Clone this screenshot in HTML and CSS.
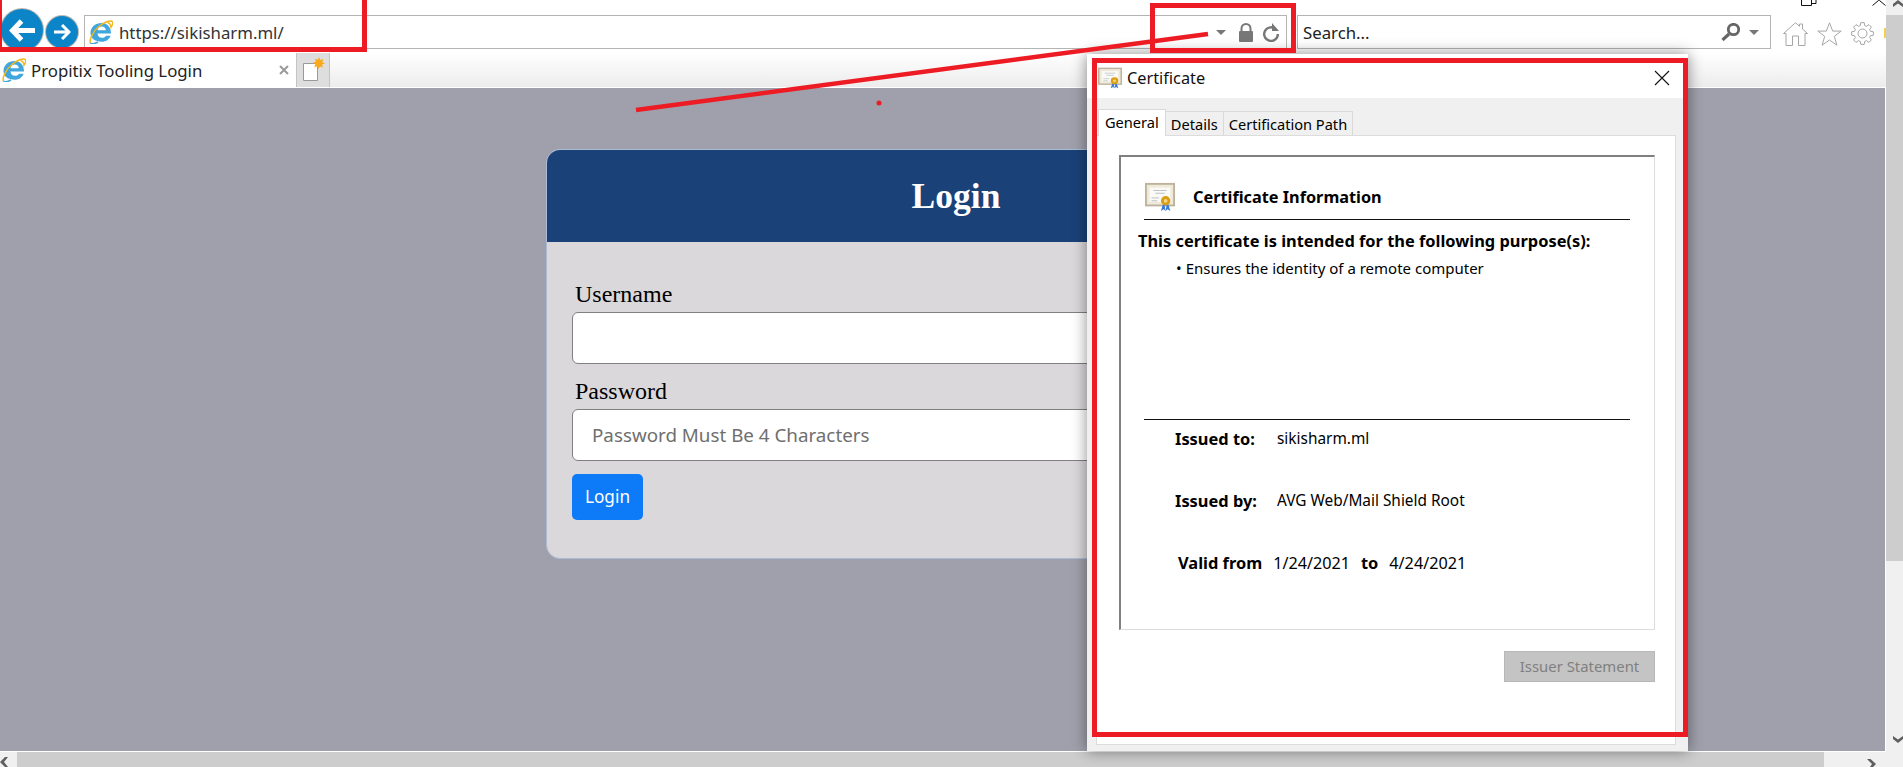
FILE: index.html
```html
<!DOCTYPE html>
<html lang="en">
<head>
  <meta charset="UTF-8" />
  <title>Propitix Tooling Login</title>
  <link rel="stylesheet" href="styles.css">
</head>
<body>
  <div class="screen">
    <div class="browser">
      <header class="toolbar">
        <div class="nav-btns">
          <span class="nav-back">
            <svg width="26" height="23" viewBox="0 0 26 23"><path d="M12.500 2 3.500 11.500l9 9.500M4 11.500h22" fill="none" stroke="#fff" stroke-width="5"/></svg>
          </span>
          <span class="nav-forward">
            <svg width="18" height="16" viewBox="0 0 18 16"><path d="M9 1l7 7-7 7M16 8H1" fill="none" stroke="#fff" stroke-width="3"/></svg>
          </span>
        </div>
        <div class="address">
          <svg class="ie" width="24" height="24" viewBox="0 0 24 24"><use href="#ie-logo"/></svg>
          <span class="url">https://sikisharm.ml/</span>
          <span class="caret"></span>
          <svg class="lock" width="16" height="19" viewBox="0 0 16 19"><path d="M3.500 8V5.500a4.500 4.500 0 0 1 9 0V8" fill="none" stroke="#777" stroke-width="2"/><rect x="1" y="8" width="14" height="11" rx="1" fill="#777"/></svg>
          <svg class="reload" width="18" height="19" viewBox="0 0 18 19"><path d="M14 6.500A6.800 6.800 0 1 0 15.800 11" fill="none" stroke="#777" stroke-width="2.400"/><path d="M10 0v8h7z" fill="#777"/></svg>
        </div>
        <div class="search">
          <span class="search-text">Search...</span>
          <svg width="20" height="18" viewBox="0 0 20 18"><circle cx="12.500" cy="6.500" r="5.200" fill="none" stroke="#666" stroke-width="2.800"/><path d="M8 11l-6.500 6" stroke="#666" stroke-width="3.200"/></svg>
          <span class="caret"></span>
        </div>
        <div class="tools">
          <svg width="25" height="24" viewBox="0 0 25 24"><path d="M.5 11.500 12.500.7l4 3.600V2h3v5l5 4.500h-2.500M.5 11.500H3V23.500h6.500V14h6v9.500H22V11.500" fill="none" stroke="#a6a6a6"/></svg>
          <svg width="25" height="24" viewBox="0 0 25 24"><path d="M12.500.8l3.200 8.300h8.500l-6.900 5.300 2.600 8.800-7.400-5.200-7.400 5.200 2.600-8.800L.8 9.100h8.500z" fill="none" stroke="#a6a6a6"/></svg>
          <svg width="23" height="23" viewBox="-11.500 -11.500 23 23"><circle r="4.500" fill="none" stroke="#a6a6a6"/><path d="M-2.260-7.880-1.720-10.860 1.720-10.860 2.260-7.880 3.970-7.170 6.460-8.890 8.890-6.460 7.170-3.970 7.880-2.260 10.860-1.720 10.860 1.720 7.880 2.260 7.170 3.970 8.890 6.460 6.460 8.890 3.970 7.170 2.260 7.880 1.720 10.860-1.720 10.860-2.260 7.880-3.970 7.170-6.460 8.890-8.890 6.460-7.170 3.970-7.880 2.260-10.860 1.720-10.860-1.720-7.880-2.260-7.170-3.970-8.890-6.460-6.460-8.890-3.970-7.170z" fill="none" stroke="#a6a6a6"/></svg>
          <span class="smiley"></span>
        </div>
        <svg class="win-restore" width="16" height="16" viewBox="0 0 16 16"><path d="M.5 5.500h10v10H.5zM4 5V.5h11v13h-4" fill="#fff" stroke="#111"/></svg>
        <svg class="win-close" width="14" height="6" viewBox="0 0 14 6"><path d="M.5 5.500 6.500.5h1l6 5" fill="none" stroke="#111"/></svg>
      </header>

      <nav class="tabs">
        <div class="tab">
          <svg width="24" height="24" viewBox="0 0 24 24"><use href="#ie-logo"/></svg>
          <span class="tab-title">Propitix Tooling Login</span>
          <svg class="tab-close" width="10" height="10" viewBox="0 0 10 10"><path d="M1 1l8 8M9 1 1 9" stroke="#9a9a9a" stroke-width="2"/></svg>
        </div>
        <div class="new-tab">
          <svg width="24" height="26" viewBox="0 0 24 26"><path d="M2.500 6.500h14v17h-14z" fill="#fff" stroke="#999"/><path d="M18 0l1.300 3 3-1-1 3 2.700 1.500-3 1 1 3-3-1-1.500 2.500-1.200-2.800-3 1 1-3-2.500-1.500 3-1-.8-3 3 1z" fill="#f9a91c"/></svg>
        </div>
      </nav>

      <main class="page">
        <section class="card">
          <h1 class="card-head">Login</h1>
          <form class="card-body">
            <label class="field-label">Username</label>
            <div class="input"></div>
            <label class="field-label">Password</label>
            <div class="input placeholder">Password Must Be 4 Characters</div>
            <button class="login-btn" type="button">Login</button>
          </form>
        </section>
      </main>
    </div>

    <aside class="vscroll">
      <svg class="chev-up" width="10" height="7" viewBox="0 0 10 7"><path d="M0 7V4l5-4 5 4v3L5 3.500z" fill="#5f5f5f"/></svg>
      <div class="vthumb"></div>
      <svg class="chev-down" width="10" height="7" viewBox="0 0 10 7"><path d="M0 0v3l5 4 5-4V0L5 3.500z" fill="#5f5f5f"/></svg>
    </aside>
  </div>

  <footer class="hscroll">
    <svg class="chev-left" width="8" height="10" viewBox="0 0 8 10"><path d="M8 0H5L0 5l5 5h3L4 5z" fill="#5f5f5f"/></svg>
    <div class="hthumb"></div>
    <svg class="chev-right" width="9" height="8" viewBox="0 0 9 8"><path d="M0 0h3.500L9 5l-3 3H3l2-3z" fill="#5f5f5f"/></svg>
  </footer>

  <!-- certificate window floats over the page -->
  <div class="dialog">
    <div class="dialog-title">
      <svg width="24" height="22" viewBox="0 0 32 32" preserveAspectRatio="none"><use href="#cert-icon"/></svg>
      <span>Certificate</span>
      <svg class="dialog-x" width="16" height="16" viewBox="0 0 16 16"><path d="M1 1l14 14M15 1 1 15" stroke="#111" stroke-width="1.100"/></svg>
    </div>
    <div class="dialog-body">
      <div class="dialog-tabs">
        <span class="dtab active">General</span>
        <span class="dtab">Details</span>
        <span class="dtab">Certification Path</span>
      </div>
      <div class="dialog-panel">
        <div class="cert-box">
          <div class="cert-head">
            <svg width="32" height="30" viewBox="0 0 32 32"><use href="#cert-icon"/></svg>
            <strong>Certificate Information</strong>
          </div>
          <div class="cert-purpose">
            <p class="purpose-title">This certificate is intended for the following purpose(s):</p>
            <p class="purpose-item"><span class="dot">•</span>Ensures the identity of a remote computer</p>
          </div>
          <div class="cert-rule"></div>
          <div class="cert-info">
            <p class="info-row"><b class="info-key">Issued to:</b><span>sikisharm.ml</span></p>
            <p class="info-row"><b class="info-key">Issued by:</b><span>AVG Web/Mail Shield Root</span></p>
            <p class="info-row valid"><b>Valid from</b><span>1/24/2021</span><b>to</b><span>4/24/2021</span></p>
          </div>
        </div>
        <div class="dialog-actions">
          <span class="issuer-btn">Issuer Statement</span>
        </div>
      </div>
    </div>
  </div>

  <!-- red annotations drawn on top of the screenshot -->
  <div class="mark mark-nav"></div>
  <div class="mark mark-lock"></div>
  <div class="mark mark-dialog"></div>
  <svg class="mark-line" width="1903" height="767" viewBox="0 0 1903 767">
    <path d="M636 110 1208 34" stroke="#ed1c24" stroke-width="4.500"/>
    <circle cx="879" cy="103" r="2.500" fill="#ed1c24"/>
  </svg>

  <svg width="0" height="0" class="defs">
    <defs>
      <symbol id="ie-logo" viewBox="0 0 24 24">
        <path d="M1.500 13C1.500 7 6.500 3 12.500 3 18.500 3 22 7.500 22 13.500H8.500c.2 2.800 2 4.300 4.500 4.300 1.800 0 3.200-.7 4-2.100h4.600c-1.400 3.900-4.800 6-8.800 6C6.500 21.700 1.500 18.500 1.500 13zM8.600 10.200h8.300c-.3-2.200-1.900-3.600-4.100-3.600S9 8 8.600 10.200z" fill="#3fa6de"/>
        <path d="M1.500 23C0 20.500 3.500 11.500 10.500 6 16 1.800 21.500-.2 23.300 1.600c1.100 1.100.3 3.400-1.300 5.600-.3-2.400-1.300-4.200-3.500-4.500" fill="none" stroke="#f4b71e" stroke-width="1.500"/>
        <path d="M1.500 23c1.700 1.300 5 .4 7.500-1" fill="none" stroke="#3fa6de" stroke-width="1.500"/>
      </symbol>
      <symbol id="cert-icon" viewBox="0 0 32 32">
        <rect x="1" y="2" width="30" height="23" fill="#efe9d9" stroke="#bdb39c" stroke-width="2"/>
        <rect x="5" y="6" width="22" height="15" fill="#fbfaf6"/>
        <path d="M9 9h14M11 12h10M7 17h8M7 20h6" stroke="#b9bdc4"/>
        <path d="M19 24l-2 7 3-2 2 2 1-6zM25 24l2 7-3-2-2 2-1-6z" fill="#3a7bd5"/>
        <circle cx="22" cy="20" r="5" fill="#dc9d13"/>
        <circle cx="22" cy="20" r="2" fill="#f3d788"/>
      </symbol>
    </defs>
  </svg>
</body>
</html>
```

FILE: styles.css
```css
* {
  box-sizing: border-box;
}
html, body {
  margin: 0;
  height: 767px;
  overflow: hidden;
}
body {
  font-family: "Noto Sans", sans-serif;
  background: #fff;
  color: #000;
  display: flex;
  flex-direction: column;
  position: relative;
}
p {
  margin: 0;
}
.defs {
  position: absolute;
}

.screen {
  display: flex;
  height: 752px;
}
.browser {
  width: 1886px;
  display: flex;
  flex-direction: column;
}

/* toolbar */
.toolbar {
  height: 53px;
  position: relative;
  display: flex;
  align-items: flex-start;
  padding-top: 15px;
  background: #fff;
}
.nav-btns {
  width: 84px;
  height: 38px;
  flex-shrink: 0;
  display: flex;
  align-items: center;
  margin-top: -4px;
  padding-left: 1px;
  gap: 3px;
}
.nav-back, .nav-forward {
  display: flex;
  align-items: center;
  justify-content: center;
  border-radius: 50%;
  background: #0c85c8;
  box-shadow: 0 0 0 1px #bdb8b0;
}
.nav-back {
  width: 42px;
  height: 42px;
}
.nav-forward {
  width: 32px;
  height: 32px;
  margin-top: 3px;
}
.address, .search {
  height: 34px;
  border: 1px solid #b4b4b4;
  display: flex;
  align-items: center;
  background: #fff;
}
.address {
  width: 1203px;
  padding: 0 6px 0 4px;
}
.ie {
  flex-shrink: 0;
}
.url {
  margin-left: 6px;
  padding-top: 1px;
  font-size: 16.8px;
  color: #333;
  flex: 1;
}
.caret {
  width: 0;
  height: 0;
  border-left: 5px solid transparent;
  border-right: 5px solid transparent;
  border-top: 5px solid #777;
}
.lock {
  margin: 0 8px 0 12px;
}
.search {
  width: 474px;
  margin-left: 10px;
  padding: 0 11px 0 5px;
}
.search-text {
  padding-top: 1px;
  font-size: 16.8px;
  color: #222;
  flex: 1;
}
.search .caret {
  margin-left: 8px;
}
.tools {
  display: flex;
  align-items: flex-start;
  gap: 9px;
  margin-left: 12px;
  padding-top: 7px;
}
.smiley {
  width: 2px;
  height: 10px;
  margin: 6px 0 0 1px;
  background: #f3cf4a;
}
.win-restore {
  position: absolute;
  left: 1801px;
  top: -10px;
}
.win-close {
  position: absolute;
  left: 1872px;
  top: 0;
}

/* tab strip */
.tabs {
  height: 34px;
  display: flex;
  background: linear-gradient(#fff, #ececec);
}
.tab {
  width: 296px;
  display: flex;
  align-items: center;
  padding: 0 7px 0 2px;
  background: #fff;
}
.tab-title {
  margin-left: 5px;
  font-size: 16.8px;
  color: #222;
  flex: 1;
}
.new-tab {
  width: 34px;
  display: flex;
  align-items: center;
  justify-content: center;
  background: #dedede;
  border-left: 1px solid #c4c4c4;
  border-right: 1px solid #c4c4c4;
}

/* login page behind the dialog */
.page {
  flex: 1;
  background: #a0a0ac;
  border-top: 1px solid #fff;
  border-bottom: 1px solid #fff;
  border-right: 1px solid #fff;
  padding-top: 61px;
  padding-left: 546px;
}
.card {
  width: 820px;
  height: 410px;
  border: 1px solid #a9bcd6;
  border-radius: 14px;
  background: #dad8da;
  overflow: hidden;
}
.card-head {
  height: 92px;
  margin: 0;
  background: #1a4178;
  color: #fff;
  font-family: "Liberation Serif", serif;
  font-size: 35.5px;
  font-weight: bold;
  text-align: center;
  line-height: 92px;
}
.card-body {
  padding: 34px 25px 0;
}
.field-label {
  display: block;
  font-family: "Liberation Serif", serif;
  font-size: 24px;
  line-height: 36px;
  padding-left: 3px;
}
.input {
  height: 52px;
  margin-bottom: 9px;
  border: 1px solid #808080;
  border-radius: 6px;
  background: #fff;
}
.input.placeholder {
  padding-left: 19px;
  font-size: 18.8px;
  line-height: 50px;
  color: #6f6f6f;
}
.login-btn {
  display: block;
  width: 71px;
  height: 46px;
  margin-top: 13px;
  padding: 0 0 2px;
  border: none;
  border-radius: 5px;
  background: #0d7bf8;
  color: #fff;
  font-family: "Noto Sans", sans-serif;
  font-size: 17.2px;
}

/* browser scrollbars */
.vscroll {
  width: 17px;
  display: flex;
  flex-direction: column;
  align-items: flex-end;
  background: #f0f0f0;
}
.vthumb {
  width: 17px;
  height: 546px;
  background: #cdcdcd;
  margin-top: 8px;
}
.chev-down {
  margin-top: auto;
  margin-bottom: 9px;
}
.hscroll {
  height: 15px;
  display: flex;
  align-items: flex-start;
  background: #f0f0f0;
}
.chev-left {
  margin: 5px 0 0 0;
}
.hthumb {
  width: 1807px;
  height: 15px;
  margin-left: 9px;
  background: #cdcdcd;
}
.chev-right {
  margin: 7px 0 0 43px;
}

/* certificate window */
.dialog {
  position: absolute;
  left: 1087px;
  top: 54px;
  width: 601px;
  height: 697px;
  display: flex;
  flex-direction: column;
  background: #f0f0f0;
  box-shadow: 0 0 14px rgba(0, 0, 0, 0.45);
}
.dialog-title {
  height: 45px;
  display: flex;
  align-items: center;
  gap: 5px;
  padding: 3px 18px 0 11px;
  background: #fff;
  font-size: 16.3px;
  color: #111;
}
.dialog-x {
  margin-left: auto;
}
.dialog-body {
  flex: 1;
  padding: 10px 12px 6px 9px;
}
.dialog-tabs {
  display: flex;
  align-items: flex-end;
  height: 27px;
  padding-left: 2px;
  font-size: 14.6px;
}
.dtab {
  height: 24px;
  padding: 0 5px;
  line-height: 25px;
  border: 1px solid #d9d9d9;
  border-bottom: none;
  background: #f0f0f0;
  margin-right: -1px;
  white-space: nowrap;
}
.dtab.active {
  height: 27px;
  padding: 0 6px;
  background: #fff;
  line-height: 24px;
  margin-bottom: -1px;
  position: relative;
}
.dialog-panel {
  height: 610px;
  padding: 19px 20px 0 22px;
  background: #fff;
  border: 1px solid #dcdcdc;
}
.cert-box {
  height: 475px;
  border: 1px solid #dcdcdc;
  border-top: 2px solid #808080;
  border-left: 2px solid #808080;
  padding-top: 25px;
}
.cert-head {
  display: flex;
  align-items: center;
  gap: 17px;
  height: 38px;
  margin: 0 24px 0 23px;
  padding-bottom: 8px;
  border-bottom: 1px solid #111;
  font-size: 16.3px;
}
.cert-purpose {
  height: 199px;
  padding-top: 9px;
  padding-left: 17px;
}
.cert-rule {
  margin: 0 24px 0 23px;
  border-bottom: 1px solid #111;
}
.purpose-title {
  font-size: 16.4px;
  font-weight: bold;
  line-height: 24px;
}
.purpose-item {
  margin: 5px 0 0 38px;
  font-size: 15px;
  line-height: 20px;
}
.dot {
  margin-right: 4px;
}
.cert-info {
  padding-top: 8px;
  font-size: 15.4px;
}
.info-row {
  display: flex;
  height: 62px;
  padding-left: 54px;
  line-height: 22px;
}
.info-row b {
  font-size: 16.4px;
}
.info-key {
  width: 102px;
}
.info-row.valid {
  padding-left: 57px;
  gap: 11px;
  font-size: 16.2px;
}
.dialog-actions {
  display: flex;
  justify-content: flex-end;
  margin-top: 21px;
}
.issuer-btn {
  width: 151px;
  height: 31px;
  background: #c4c4c4;
  border: 1px solid #b8b8b8;
  color: #808080;
  font-size: 14.9px;
  line-height: 29px;
  text-align: center;
}

/* red annotations */
.mark {
  position: absolute;
  border: 5px solid #ed1c24;
}
.mark-nav {
  left: 0;
  top: -10px;
  width: 367px;
  height: 62px;
  border-left-width: 2px;
}
.mark-lock {
  left: 1150px;
  top: 3px;
  width: 146px;
  height: 50px;
}
.mark-dialog {
  left: 1092px;
  top: 58px;
  width: 596px;
  height: 679px;
}
.mark-line {
  position: absolute;
  left: 0;
  top: 0;
}
```
